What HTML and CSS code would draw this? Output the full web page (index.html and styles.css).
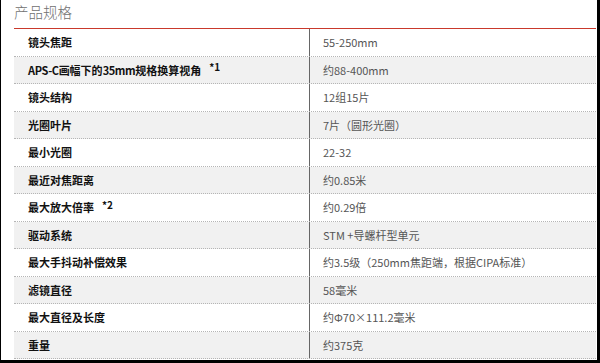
FILE: index.html
```html
<!DOCTYPE html>
<html lang="zh-CN">
<head>
<meta charset="utf-8">
<link rel="stylesheet" href="styles.css">
</head>
<body>
<div class="frame">
  <h2 class="title">产品规格</h2>
  <div class="specs">
    <div class="row"><div class="k">镜头焦距</div><div class="v">55-250mm</div></div>
    <div class="row alt"><div class="k"><span class="lat">APS-C</span>画幅下的<span class="lat">35mm</span>规格换算视角<sup>*1</sup></div><div class="v">约88-400mm</div></div>
    <div class="row"><div class="k">镜头结构</div><div class="v">12组15片</div></div>
    <div class="row alt"><div class="k">光圈叶片</div><div class="v">7片（圆形光圈）</div></div>
    <div class="row"><div class="k">最小光圈</div><div class="v">22-32</div></div>
    <div class="row alt"><div class="k">最近对焦距离</div><div class="v">约0.85米</div></div>
    <div class="row"><div class="k">最大放大倍率<sup>*2</sup></div><div class="v">约0.29倍</div></div>
    <div class="row alt"><div class="k">驱动系统</div><div class="v">STM +导螺杆型单元</div></div>
    <div class="row"><div class="k">最大手抖动补偿效果</div><div class="v">约3.5级（250mm焦距端，根据CIPA标准）</div></div>
    <div class="row alt"><div class="k">滤镜直径</div><div class="v">58毫米</div></div>
    <div class="row"><div class="k">最大直径及长度</div><div class="v">约Φ70×111.2毫米</div></div>
    <div class="row alt"><div class="k">重量</div><div class="v">约375克</div></div>
  </div>
</div>
</body>
</html>
```
FILE: styles.css
```css
html, body {
  margin: 0;
  padding: 0;
  background: #fff;
}
.frame {
  width: 600px;
  height: 363px;
  box-sizing: border-box;
  border-left: 1px solid #000;
  border-right: 3px solid #000;
  border-bottom: 3px solid #000;
  padding-left: 13px;
  padding-right: 1px;
  overflow: hidden;
  font-family: "Noto Sans CJK SC", "Liberation Sans", sans-serif;
}
.title {
  margin: 0;
  height: 29px;
  box-sizing: border-box;
  padding-top: 2px;
  font-size: 14.5px;
  font-weight: 300;
  color: #707070;
  line-height: 20px;
  border-bottom: 1px solid #c9392c;
}
.specs {
  display: flex;
  flex-direction: column;
}
.row {
  display: grid;
  grid-template-columns: 295px 1fr;
  height: 27.5px;
  box-sizing: border-box;
  border-bottom: 1px dotted #b5b5b5;
  background: #fff;
}
.row.alt {
  background: #f1f1f1;
}
.k {
  padding-left: 14px;
  font-size: 11px;
  font-weight: bold;
  color: #111;
  display: flex;
  align-items: center;
  white-space: pre;
}
.lat {
  letter-spacing: -0.4px;
}
.k sup {
  font-size: 10px;
  margin-left: 8px;
  position: relative;
  top: -3px;
}
.v {
  border-left: 1px solid #666;
  padding-left: 13px;
  font-size: 11px;
  color: #555;
  display: flex;
  align-items: center;
}
```
